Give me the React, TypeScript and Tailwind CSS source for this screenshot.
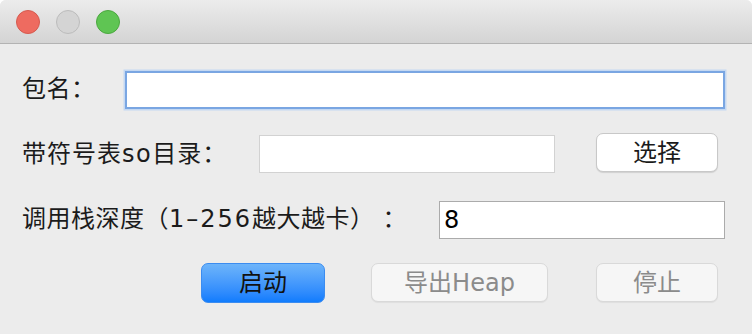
import React from "react";

const font = { fontFamily: '"DejaVu Sans", "Noto Sans CJK SC", sans-serif' };

export default function App() {
  return (
    <div className="w-[752px] h-[334px] bg-white overflow-hidden [text-spacing-trim:space-all]" style={font}>
      <div className="w-[752px] h-[334px] bg-[#ececec] rounded-t-[6px] overflow-hidden flex flex-col">
        {/* title bar */}
        <div className="h-[44px] shrink-0 bg-gradient-to-b from-[#ececec] to-[#d4d4d4] border-b border-[#b3b3b3] flex items-center pl-[16px] gap-[16px] pt-[1px]">
          <div className="w-[24px] h-[24px] rounded-full bg-[#ee6b60] border border-[#d65a4f]" />
          <div className="w-[24px] h-[24px] rounded-full bg-[#d4d4d4] border border-[#bcbcbc]" />
          <div className="w-[24px] h-[24px] rounded-full bg-[#5fc553] border border-[#4ba83f]" />
        </div>

        {/* row 1 */}
        <div className="mt-[27px] h-[38px] flex items-center pl-[22px]">
          <div className="w-[103px] text-[24px] leading-none text-[#1b1b1b] -mt-[2px] whitespace-nowrap tracking-[0.5px]">包名：</div>
          <div className="w-[600px] h-[38px] bg-white border-2 border-[#7aa6e2] shadow-[0_0_0_1.5px_#c4d8f2]" />
        </div>

        {/* row 2 */}
        <div className="mt-[24px] h-[40px] flex items-start pl-[22px]">
          <div className="w-[237px] h-[40px] flex items-center text-[24px] leading-none text-[#1b1b1b] pt-[1px] whitespace-nowrap tracking-[1px]">
            带符号表<span className="tracking-[1.5px]">so</span>目录：
          </div>
          <div className="mt-[2px] w-[296px] h-[38px] bg-white border border-[#d2d2d2]" />
          <div className="ml-[41px] w-[122px] h-[39px] bg-white border border-[#c8c8c8] rounded-[7px] shadow-[0_1px_1px_rgba(0,0,0,0.12)] flex items-center justify-center text-[24px] leading-none text-[#1b1b1b]">
            选择
          </div>
        </div>

        {/* row 3 */}
        <div className="mt-[28px] h-[38px] flex items-center pl-[22px]">
          <div className="w-[417px] text-[24px] leading-none text-[#1b1b1b] whitespace-nowrap -mt-[2px] tracking-[0.5px]">
            调用栈深度（<span className="tracking-[2px]">1–256</span>越大越卡）<span className="ml-[8px]">：</span>
          </div>
          <div className="w-[286px] h-[38px] bg-white border border-[#ababab] flex items-center pl-[4px] text-[24px] leading-none text-black">
            8
          </div>
        </div>

        {/* row 4 */}
        <div className="mt-[24px] h-[40px] flex items-start pl-[201px]">
          <div className="w-[124px] h-[40px] rounded-[7px] border border-[#3b8cf0] bg-gradient-to-b from-[#6db4fa] to-[#0f7cfd] flex items-center justify-center text-[24px] leading-none text-[#111]">
            启动
          </div>
          <div className="ml-[46px] w-[177px] h-[39px] rounded-[7px] border border-[#d9d9d9] bg-[#f6f6f6] shadow-[0_1px_1px_rgba(0,0,0,0.06)] flex items-center justify-center text-[24px] leading-none text-[#8b8b8b]">
            导出Heap
          </div>
          <div className="ml-[48px] w-[122px] h-[39px] rounded-[7px] border border-[#d9d9d9] bg-[#f6f6f6] shadow-[0_1px_1px_rgba(0,0,0,0.06)] flex items-center justify-center text-[24px] leading-none text-[#8b8b8b]">
            停止
          </div>
        </div>
      </div>
    </div>
  );
}
